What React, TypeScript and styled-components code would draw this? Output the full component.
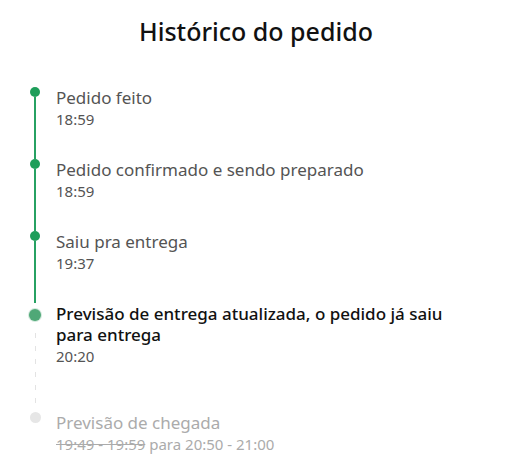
import React from "react";
import styled, { createGlobalStyle, css } from "styled-components";

const Global = createGlobalStyle`
  html, body { margin: 0; padding: 0; background: #ffffff; }
  body { font-family: "Noto Sans", Roboto, sans-serif; -webkit-font-smoothing: antialiased; }
`;

const Page = styled.div`
  width: 512px;
  height: 466px;
  overflow: hidden;
  background: #fff;
`;

const Header = styled.h1`
  margin: 0;
  padding-top: 13px;
  text-align: center;
  font-family: "Noto Sans", sans-serif;
  font-weight: 500;
  font-size: 25px;
  line-height: 36px;
  color: #111;
`;

const List = styled.ol`
  list-style: none;
  margin: 0;
  padding: 38px 0 0 29px;
`;

type State = "done" | "current" | "future";

const Item = styled.li`
  display: grid;
  grid-template-columns: 12px 1fr;
  column-gap: 15px;
`;

const Rail = styled.div<{ $offset: number }>`
  display: flex;
  flex-direction: column;
  align-items: center;
  padding-top: ${(p) => p.$offset}px;
`;

const Dot = styled.span<{ $state: State }>`
  flex: none;
  border-radius: 50%;
  ${(p) =>
    p.$state === "done"
      ? css`
          width: 10px;
          height: 10px;
          background: #1e9e5a;
        `
      : p.$state === "current"
      ? css`
          width: 12px;
          height: 12px;
          background: #4fa877;
          box-shadow: 0 0 0 1px rgba(79, 168, 119, 0.25);
        `
      : css`
          width: 11px;
          height: 11px;
          background: #e6e6e6;
        `}
`;

const Connector = styled.span<{ $kind: "solid" | "dashed"; $extend: number; $startGap: number }>`
  flex: 1;
  width: ${(p) => (p.$kind === "solid" ? "2px" : "1px")};
  margin-top: ${(p) => p.$startGap}px;
  margin-bottom: ${(p) => -p.$extend}px;
  ${(p) =>
    p.$kind === "solid"
      ? css`
          background: #27a163;
        `
      : css`
          background: repeating-linear-gradient(
            to bottom,
            #e3e3e3 0 5px,
            transparent 5px 13px
          );
        `}
`;

const Content = styled.div<{ $gap: number }>`
  min-width: 0;
  padding-bottom: ${(p) => p.$gap}px;
`;

const Title = styled.div<{ $state: State }>`
  font-size: 17px;
  line-height: 21px;
  font-weight: ${(p) => (p.$state === "current" ? 500 : 400)};
  color: ${(p) =>
    p.$state === "done" ? "#545454" : p.$state === "current" ? "#111" : "#ababab"};
  padding-right: 40px;
`;

const Time = styled.div<{ $state: State }>`
  margin-top: 1px;
  font-size: 15px;
  line-height: 21px;
  color: ${(p) => (p.$state === "future" ? "#ababab" : "#545454")};
`;

const Struck = styled.s`
  text-decoration: line-through;
`;

type Entry = {
  title: string;
  time: React.ReactNode;
  state: State;
  gap: number;
  offset: number;
  line?: "solid" | "dashed";
  extend?: number;
  startGap?: number;
};

const entries: Entry[] = [
  { title: "Pedido feito", time: "18:59", state: "done", gap: 29, offset: 0, line: "solid" },
  { title: "Pedido confirmado e sendo preparado", time: "18:59", state: "done", gap: 29, offset: 0, line: "solid" },
  { title: "Saiu pra entrega", time: "19:37", state: "done", gap: 29, offset: 0, line: "solid" },
  {
    title: "Previsão de entrega atualizada, o pedido já saiu para entrega",
    time: "20:20",
    state: "current",
    gap: 45,
    offset: 6,
    line: "dashed",
    extend: -6,
    startGap: 12,
  },
  {
    title: "Previsão de chegada",
    time: (
      <>
        <Struck>19:49 - 19:59</Struck> para 20:50 - 21:00
      </>
    ),
    state: "future",
    gap: 0,
    offset: 0,
  },
];

export default function App() {
  return (
    <Page>
      <Global />
      <Header>Histórico do pedido</Header>
      <List>
        {entries.map((e, i) => (
          <Item key={i}>
            <Rail $offset={e.offset}>
              <Dot $state={e.state} />
              {e.line && (
                <Connector $kind={e.line} $extend={e.extend ?? 0} $startGap={e.startGap ?? 0} />
              )}
            </Rail>
            <Content $gap={e.gap}>
              <Title $state={e.state}>{e.title}</Title>
              <Time $state={e.state}>{e.time}</Time>
            </Content>
          </Item>
        ))}
      </List>
    </Page>
  );
}
